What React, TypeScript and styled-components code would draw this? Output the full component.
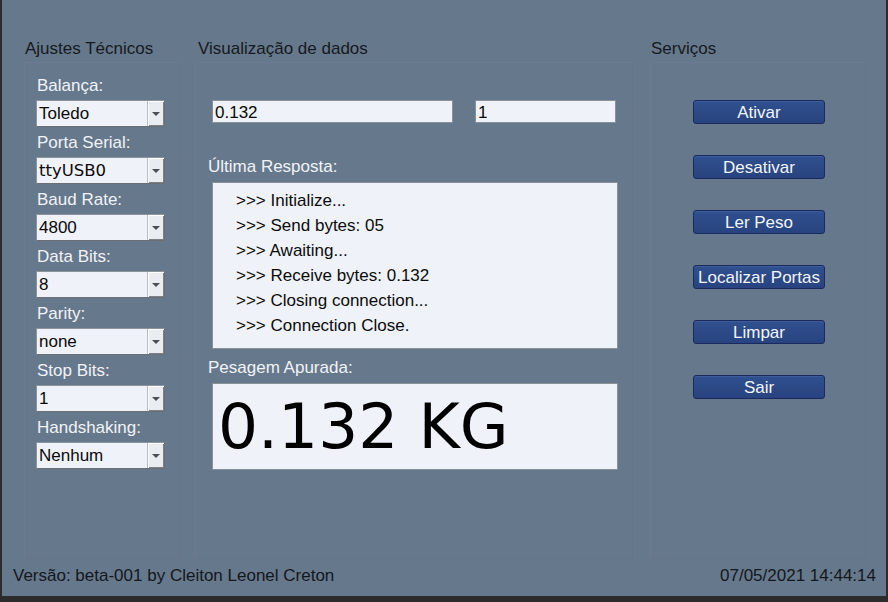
import styled, { createGlobalStyle } from "styled-components";

const GlobalStyle = createGlobalStyle`
  html, body {
    margin: 0;
    padding: 0;
    background: #2b2b2b;
    overflow: hidden;
  }
`;

const Screen = styled.div`
  width: 888px;
  height: 602px;
  display: flex;
  background: #2b2b2b;
`;

const Window = styled.div`
  margin-left: 2px;
  width: 884px;
  height: 596px;
  background: #66788c;
  display: flex;
  flex-direction: column;
  padding-top: 38px;
  box-sizing: border-box;
  font-family: "Liberation Sans", Arial, sans-serif;
  font-size: 17px;
`;

const Columns = styled.div`
  display: flex;
  padding-left: 22px;
`;

const Group = styled.div<{ $w: number; $gap: number }>`
  width: ${(p) => p.$w}px;
  margin-right: ${(p) => p.$gap}px;
  display: flex;
  flex-direction: column;
  gap: 4px;
`;

const GroupTitle = styled.div<{ $indent?: number }>`
  height: 20px;
  line-height: 21px;
  color: #161a20;
  padding-left: ${(p) => p.$indent ?? 1}px;
`;

const Frame = styled.div`
  height: 497px;
  box-sizing: border-box;
  border: 1px solid #6b7c90;
  border-right-color: #64758a;
  border-bottom-color: #64758a;
  display: flex;
  flex-direction: column;
`;

const SettingsFrame = styled(Frame)`
  padding: 12px 0 0 11px;
  gap: 5px;
`;

const Field = styled.div`
  display: flex;
  flex-direction: column;
  gap: 5px;
`;

const Label = styled.div`
  height: 20px;
  line-height: 21px;
  color: #f1f3f7;
  padding-left: 1px;
`;

const Combo = styled.div`
  width: 129px;
  height: 27px;
  box-sizing: border-box;
  display: flex;
  background: #eff2f8;
  border: 1px solid #8d949c;
  border-right-color: #6b6f74;
  border-bottom-color: #6b6f74;
`;

const ComboValue = styled.div<{ $mono?: boolean }>`
  flex: 1;
  padding-left: 2px;
  line-height: 26px;
  font-family: ${(p) => (p.$mono ? '"DejaVu Sans", sans-serif' : '"Liberation Sans", Arial, sans-serif')};
  font-size: ${(p) => (p.$mono ? 16.5 : 17)}px;
  color: #0a0a0a;
`;

const ComboButton = styled.div`
  width: 16px;
  display: flex;
  align-items: center;
  justify-content: center;
  background: #e9ecf1;
  box-shadow: inset 1px 1px 0 #ffffff, inset -1px -1px 0 #7c8088;
  border-left: 1px solid #b7bcc3;
`;

const Arrow = styled.div`
  width: 0;
  height: 0;
  border-left: 4px solid transparent;
  border-right: 4px solid transparent;
  border-top: 4px solid #4a4e55;
`;

const DataFrame = styled(Frame)`
  padding: 37px 0 0 12px;
`;

const InputRow = styled.div`
  display: flex;
  gap: 22px;
  margin-left: 4px;
`;

const Input = styled.div<{ $w: number }>`
  width: ${(p) => p.$w}px;
  height: 23px;
  box-sizing: border-box;
  background: #eff2f8;
  border: 1px solid #8a9098;
  line-height: 24px;
  padding-left: 2px;
  color: #0a0a0a;
`;

const BoxLabel = styled(Label)<{ $top: number }>`
  padding-left: 0;
  margin-top: ${(p) => p.$top}px;
  margin-bottom: 6px;
`;

const LogBox = styled.div`
  margin-left: 4px;
  width: 406px;
  height: 167px;
  box-sizing: border-box;
  background: #eff2f8;
  border: 1px solid #8a9098;
  padding: 5px 0 0 23px;
`;

const LogLine = styled.div`
  line-height: 25px;
  color: #0c0c0c;
`;

const WeightBox = styled(LogBox)`
  height: 87px;
  padding: 0 0 0 5px;
  font-family: "DejaVu Sans", sans-serif;
  font-size: 63px;
  line-height: 85px;
  color: #000;
`;

const ServiceFrame = styled(Frame)`
  padding-top: 37px;
  align-items: center;
  gap: 31px;
`;

const Button = styled.div`
  width: 132px;
  height: 24px;
  box-sizing: border-box;
  margin-left: 2px;
  border: 1px solid #1a2a5c;
  border-radius: 3px;
  background: linear-gradient(#30508f, #28437f);
  box-shadow: inset 0 1px 0 #3c5c9c;
  color: #f2f5fb;
  text-align: center;
  line-height: 24px;
`;

const Footer = styled.div`
  margin-top: 7px;
  height: 20px;
  line-height: 20px;
  display: flex;
  justify-content: space-between;
  padding: 0 10px 0 11px;
  color: #14171c;
`;

const fields: [string, string, boolean?][] = [
  ["Balança:", "Toledo"],
  ["Porta Serial:", "ttyUSB0", true],
  ["Baud Rate:", "4800"],
  ["Data Bits:", "8"],
  ["Parity:", "none"],
  ["Stop Bits:", "1"],
  ["Handshaking:", "Nenhum"],
];

const log = [
  ">>> Initialize...",
  ">>> Send bytes: 05",
  ">>> Awaiting...",
  ">>> Receive bytes: 0.132",
  ">>> Closing connection...",
  ">>> Connection Close.",
];

const services = ["Ativar", "Desativar", "Ler Peso", "Localizar Portas", "Limpar", "Sair"];

export default function App() {
  return (
    <Screen>
      <GlobalStyle />
      <Window>
        <Columns>
          <Group $w={157} $gap={14}>
            <GroupTitle>Ajustes Técnicos</GroupTitle>
            <SettingsFrame>
              {fields.map(([label, value, mono]) => (
                <Field key={label}>
                  <Label>{label}</Label>
                  <Combo>
                    <ComboValue $mono={mono}>{value}</ComboValue>
                    <ComboButton>
                      <Arrow />
                    </ComboButton>
                  </Combo>
                </Field>
              ))}
            </SettingsFrame>
          </Group>
          <Group $w={438} $gap={17}>
            <GroupTitle $indent={3}>Visualização de dados</GroupTitle>
            <DataFrame>
              <InputRow>
                <Input $w={241}>0.132</Input>
                <Input $w={141}>1</Input>
              </InputRow>
              <BoxLabel $top={33}>Última Resposta:</BoxLabel>
              <LogBox>
                {log.map((line) => (
                  <LogLine key={line}>{line}</LogLine>
                ))}
              </LogBox>
              <BoxLabel $top={8}>Pesagem Apurada:</BoxLabel>
              <WeightBox>0.132 KG</WeightBox>
            </DataFrame>
          </Group>
          <Group $w={216} $gap={0}>
            <GroupTitle>Serviços</GroupTitle>
            <ServiceFrame>
              {services.map((s) => (
                <Button key={s}>{s}</Button>
              ))}
            </ServiceFrame>
          </Group>
        </Columns>
        <Footer>
          <span>Versão: beta-001 by Cleiton Leonel Creton</span>
          <span>07/05/2021 14:44:14</span>
        </Footer>
      </Window>
    </Screen>
  );
}
